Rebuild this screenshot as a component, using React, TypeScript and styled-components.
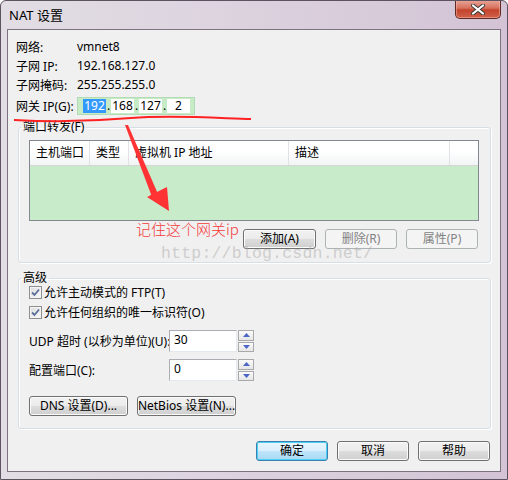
import React, { FC } from "react";
import styled, { createGlobalStyle } from "styled-components";

const GlobalStyle = createGlobalStyle`
  html, body {
    margin: 0;
    padding: 0;
    background: #ffffff;
  }
  body {
    font-family: "Noto Sans", "Noto Sans CJK SC", sans-serif;
    font-size: 12px;
    color: #000;
  }
`;

const Window = styled.div`
  position: relative;
  width: 508px;
  height: 480px;
  box-sizing: border-box;
  display: flex;
  flex-direction: column;
  border: 1px solid #5d5360;
  border-radius: 6px 6px 0 0;
  background: linear-gradient(to right, #e2dde4 0%, #dcd3de 45%, #d3c3d5 100%);
  overflow: hidden;
`;

const TitleBar = styled.div`
  height: 28px;
  display: flex;
  justify-content: space-between;
  align-items: flex-start;
  padding-left: 8px;
`;

const Title = styled.div`
  font-size: 13px;
  line-height: 28px;
  color: #000;
`;

const CloseButton = styled.div`
  width: 46px;
  height: 19px;
  margin-right: 6px;
  margin-top: -1px;
  box-sizing: border-box;
  border: 1px solid #5e2a22;
  border-top: none;
  border-radius: 0 0 5px 5px;
  background: linear-gradient(#e8a79a 0%, #d7715e 45%, #c4432c 55%, #d0614a 100%);
  box-shadow: inset 0 0 0 1px rgba(255, 200, 190, 0.45);
  display: flex;
  align-items: center;
  justify-content: center;
`;

const Client = styled.div`
  flex: 1;
  margin: 0 6px 7px 6px;
  border: 1px solid #7c7280;
  background: #f0f0f0;
  display: flex;
  flex-direction: column;
`;

const Info = styled.div`
  padding: 7px 0 0 8px;
`;

const InfoRow = styled.div<{ $gap?: number }>`
  display: flex;
  align-items: center;
  height: 19px;
  margin-top: ${(p) => p.$gap ?? 0}px;
`;

const Label = styled.div`
  width: 61px;
  white-space: nowrap;
`;

const IpBox = styled.div`
  width: 118px;
  height: 18px;
  box-sizing: border-box;
  background: #c6ebc6;
  border: 1px solid #b4dcb4;
  display: flex;
  align-items: center;
  padding-left: 5px;
`;

const IpSeg = styled.div`
  width: 23px;
  height: 14px;
  background: #ffffff;
  display: flex;
  align-items: center;
  justify-content: center;
  line-height: 14px;
`;

const IpDot = styled.div`
  width: 5px;
  text-align: center;
  line-height: 14px;
`;

const Selected = styled.span`
  background: #3399ff;
  color: #ffffff;
  padding: 0 1px;
`;

const Group = styled.fieldset<{ $top: number }>`
  margin: ${(p) => p.$top}px 9px 0 10px;
  padding: 0;
  min-width: 0;
  border: 1px solid #d5dfe5;
  border-radius: 3px;
  box-shadow: inset 1px 1px 0 #ffffff, 1px 1px 0 #ffffff;
`;

const Legend = styled.legend`
  margin-left: 2px;
  padding: 0 2px;
  line-height: 14px;
`;

const ListView = styled.div`
  margin: 6px 11px 0 10px;
  height: 81px;
  box-sizing: border-box;
  border: 1px solid #828790;
  background: #c8ebc9;
  display: flex;
  flex-direction: column;
`;

const ListHeader = styled.div`
  display: flex;
  height: 24px;
  background: linear-gradient(#ffffff 0%, #ffffff 40%, #f3f4f6 100%);
  border-bottom: 1px solid #d5d5d5;
`;

const HeaderCell = styled.div<{ $w: number }>`
  width: ${(p) => p.$w}px;
  box-sizing: border-box;
  padding-left: 6px;
  line-height: 23px;
  border-right: 1px solid #e1e2e5;
  white-space: nowrap;
`;

const ButtonRow = styled.div<{ $top: number; $right: number; $bottom: number }>`
  display: flex;
  justify-content: flex-end;
  gap: 9px;
  margin-top: ${(p) => p.$top}px;
  padding-right: ${(p) => p.$right}px;
  padding-bottom: ${(p) => p.$bottom}px;
`;

const LeftRow = styled.div`
  display: flex;
  gap: 9px;
  margin-top: 15px;
  padding: 0 0 12px 10px;
`;

const Button = styled.div<{ $w: number; $kind?: "normal" | "primary" | "disabled" }>`
  width: ${(p) => p.$w}px;
  height: 20px;
  box-sizing: border-box;
  border-radius: 3px;
  display: flex;
  align-items: center;
  justify-content: center;
  white-space: nowrap;
  line-height: 18px;
  border: 1px solid
    ${(p) => (p.$kind === "primary" ? "#3c7fb1" : p.$kind === "disabled" ? "#adb2b5" : "#707070")};
  color: ${(p) => (p.$kind === "disabled" ? "#838383" : "#000")};
  background: ${(p) =>
    p.$kind === "primary"
      ? "linear-gradient(#e9f5fd 0%, #d9effc 49%, #bfe5fb 50%, #a9d8f3 100%)"
      : p.$kind === "disabled"
      ? "#f4f4f4"
      : "linear-gradient(#f2f2f2 0%, #ebebeb 49%, #dddddd 50%, #cfcfcf 100%)"};
  box-shadow: ${(p) =>
    p.$kind === "primary"
      ? "inset 0 0 0 1px #4ed0f5"
      : p.$kind === "disabled"
      ? "none"
      : "inset 0 0 0 1px #fbfbfb"};
`;

const CheckRow = styled.div<{ $top?: number }>`
  display: flex;
  align-items: center;
  height: 20px;
  margin-top: ${(p) => p.$top ?? 0}px;
  padding-left: 10px;
  gap: 2px;
`;

const CheckBox = styled.div`
  width: 13px;
  height: 13px;
  box-sizing: border-box;
  border: 1px solid #8e8f8f;
  background: linear-gradient(135deg, #dcdcdc, #fafafa);
  box-shadow: inset 0 0 0 1px #f4f4f4;
  display: flex;
  align-items: center;
  justify-content: center;
`;

const FieldRow = styled.div<{ $top: number }>`
  display: flex;
  align-items: center;
  margin-top: ${(p) => p.$top}px;
  padding-left: 10px;
`;

const FieldLabel = styled.div`
  width: 140px;
  white-space: nowrap;
`;

const TextInput = styled.div`
  width: 68px;
  height: 22px;
  box-sizing: border-box;
  background: #ffffff;
  border: 1px solid #abadb3;
  border-color: #abadb3 #e3e9ef #e3e9ef #abadb3;
  padding: 2px 0 0 4px;
  line-height: 14px;
`;

const Spinner = styled.div`
  width: 16px;
  height: 22px;
  margin-left: 1px;
  display: flex;
  flex-direction: column;
  gap: 1px;
`;

const SpinButton = styled.div`
  flex: 1;
  box-sizing: border-box;
  border: 1px solid #a9a9a9;
  background: linear-gradient(#fbfbfb, #e6e6e6);
  display: flex;
  align-items: center;
  justify-content: center;
`;

const Overlay = styled.svg`
  position: absolute;
  left: 0;
  top: 0;
  pointer-events: none;
`;

const Note = styled.div`
  position: absolute;
  left: 135px;
  top: 219px;
  font-size: 15px;
  line-height: 18px;
  color: #f53a3a;
  font-family: "Noto Sans CJK SC", sans-serif;
  font-weight: 300;
`;

const Watermark = styled.div`
  position: absolute;
  left: 160px;
  top: 244px;
  font-family: "Liberation Mono", monospace;
  font-size: 16.5px;
  line-height: 18px;
  color: rgba(170, 170, 170, 0.5);
  letter-spacing: 0.2px;
`;

const Arrow: FC<{ dir: "up" | "down" }> = ({ dir }) => (
  <svg width="7" height="4" viewBox="0 0 7 4">
    <path d={dir === "up" ? "M0 4 L3.5 0 L7 4 Z" : "M0 0 L7 0 L3.5 4 Z"} fill="#4a66c8" />
  </svg>
);

const Check = () => (
  <svg width="9" height="9" viewBox="0 0 9 9">
    <path d="M1 4.5 L3.5 7 L8 1.5" stroke="#5a6e9a" strokeWidth="1.8" fill="none" />
  </svg>
);

const App: FC = () => (
  <>
    <GlobalStyle />
    <Window>
      <TitleBar>
        <Title>NAT 设置</Title>
        <CloseButton>
          <svg width="14" height="11" viewBox="0 0 14 11">
            <path d="M2 1.5 L12 9.5 M12 1.5 L2 9.5" stroke="#3b3b3b" strokeWidth="4" strokeLinecap="round" />
            <path d="M2 1.5 L12 9.5 M12 1.5 L2 9.5" stroke="#ffffff" strokeWidth="2.2" strokeLinecap="round" />
          </svg>
        </CloseButton>
      </TitleBar>
      <Client>
        <Info>
          <InfoRow>
            <Label>网络:</Label>
            <span>vmnet8</span>
          </InfoRow>
          <InfoRow>
            <Label>子网 IP:</Label>
            <span>192.168.127.0</span>
          </InfoRow>
          <InfoRow>
            <Label>子网掩码:</Label>
            <span>255.255.255.0</span>
          </InfoRow>
          <InfoRow $gap={2}>
            <Label>网关 IP(G):</Label>
            <IpBox>
              <IpSeg>
                <Selected>192</Selected>
              </IpSeg>
              <IpDot>.</IpDot>
              <IpSeg>168</IpSeg>
              <IpDot>.</IpDot>
              <IpSeg>127</IpSeg>
              <IpDot>.</IpDot>
              <IpSeg>2</IpSeg>
            </IpBox>
          </InfoRow>
        </Info>

        <Group $top={5}>
          <Legend>端口转发(F)</Legend>
          <ListView>
            <ListHeader>
              <HeaderCell $w={60}>主机端口</HeaderCell>
              <HeaderCell $w={39}>类型</HeaderCell>
              <HeaderCell $w={160}>虚拟机 IP 地址</HeaderCell>
              <HeaderCell $w={161}>描述</HeaderCell>
            </ListHeader>
          </ListView>
          <ButtonRow $top={8} $right={12} $bottom={13}>
            <Button $w={73}>添加(A)</Button>
            <Button $w={72} $kind="disabled">删除(R)</Button>
            <Button $w={72} $kind="disabled">属性(P)</Button>
          </ButtonRow>
        </Group>

        <Group $top={8}>
          <Legend>高级</Legend>
          <CheckRow $top={-3}>
            <CheckBox>
              <Check />
            </CheckBox>
            <span>允许主动模式的 FTP(T)</span>
          </CheckRow>
          <CheckRow>
            <CheckBox>
              <Check />
            </CheckBox>
            <span>允许任何组织的唯一标识符(O)</span>
          </CheckRow>
          <FieldRow $top={8}>
            <FieldLabel>UDP 超时 (以秒为单位)(U):</FieldLabel>
            <TextInput>30</TextInput>
            <Spinner>
              <SpinButton>
                <Arrow dir="up" />
              </SpinButton>
              <SpinButton>
                <Arrow dir="down" />
              </SpinButton>
            </Spinner>
          </FieldRow>
          <FieldRow $top={7}>
            <FieldLabel>配置端口(C):</FieldLabel>
            <TextInput>0</TextInput>
            <Spinner>
              <SpinButton>
                <Arrow dir="up" />
              </SpinButton>
              <SpinButton>
                <Arrow dir="down" />
              </SpinButton>
            </Spinner>
          </FieldRow>
          <LeftRow>
            <Button $w={99}>DNS 设置(D)...</Button>
            <Button $w={99}>NetBios 设置(N)...</Button>
          </LeftRow>
        </Group>

        <ButtonRow $top={12} $right={10} $bottom={0}>
          <Button $w={72} $kind="primary">确定</Button>
          <Button $w={72}>取消</Button>
          <Button $w={72}>帮助</Button>
        </ButtonRow>
      </Client>

      <Watermark>http://blog.csdn.net/</Watermark>
      <Note>记住这个网关ip</Note>
      <Overlay width="508" height="480" viewBox="0 0 508 480">
        <path
          d="M13 119 C 50 121, 95 120, 130 117 C 170 114, 215 117, 250 118"
          stroke="#ff2222"
          strokeWidth="2"
          fill="none"
        />
        <path d="M124 124 L127 124 L157 193 L151 196 Z" fill="#ff3333" />
        <path d="M146 196 L166 186 L168 210 Z" fill="#ff3333" />
      </Overlay>
    </Window>
  </>
);

export default App;
